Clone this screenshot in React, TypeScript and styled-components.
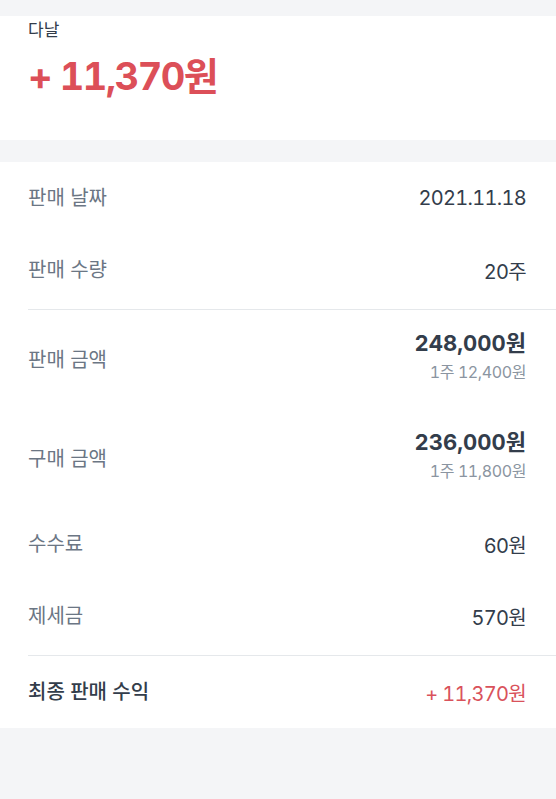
import styled, { createGlobalStyle } from "styled-components";

const GlobalStyle = createGlobalStyle`
    html, body {
        margin: 0;
        padding: 0;
        background-color: #f4f5f7;
    }
    body {
        font-family: "Inter", "Noto Sans CJK KR", sans-serif;
        font-feature-settings: "tnum";
        -webkit-font-smoothing: antialiased;
    }
`;

const Page = styled.div`
    width: 556px;
    min-height: 799px;
    padding-top: 16px;
    background-color: #f4f5f7;
`;

const Summary = styled.section`
    background-color: #fff;
    height: 124px;
    padding: 3px 28px 0;
    box-sizing: border-box;
    margin-bottom: 22px;
`;

const Company = styled.div`
    font-size: 17px;
    line-height: 22px;
    color: #333d4b;
`;

const Profit = styled.div`
    margin-top: 11px;
    font-size: 38px;
    line-height: 48px;
    font-weight: 700;
    color: #dc4f58;
    letter-spacing: -1.5px;
`;

const Details = styled.section`
    background-color: #fff;
    padding-left: 28px;
`;

const Row = styled.div<{ $tall?: boolean }>`
    display: flex;
    align-items: center;
    justify-content: space-between;
    height: ${(p) => (p.$tall ? "99px" : "72px")};
    padding-right: 30px;
    box-sizing: border-box;
`;

const Label = styled.div<{ $strong?: boolean }>`
    font-size: 20px;
    margin-top: -3px;
    color: ${(p) => (p.$strong ? "#333d4b" : "#6b7684")};
    font-weight: ${(p) => (p.$strong ? 500 : 400)};
`;

const Value = styled.div<{ $red?: boolean }>`
    font-size: 20px;
    color: ${(p) => (p.$red ? "#d9525b" : "#333d4b")};
    text-align: right;
    letter-spacing: -0.7px;
`;

const ValueStack = styled.div`
    display: flex;
    flex-direction: column;
    align-items: flex-end;
    gap: 5px;
    margin-top: -7px;
`;

const MainAmount = styled.div`
    font-size: 22px;
    line-height: 26px;
    font-weight: 700;
    color: #333d4b;
`;

const SubAmount = styled.div`
    font-size: 16px;
    line-height: 22px;
    color: #8b95a1;
    letter-spacing: -0.4px;
`;

const Divider = styled.hr`
    margin: 3px 0 0;
    border: none;
    border-top: 1px solid #e5e8eb;
`;

const App = () => {
    return (
        <Page>
            <GlobalStyle />
            <Summary>
                <Company>다날</Company>
                <Profit>+ 11,370원</Profit>
            </Summary>

            <Details>
                <Row>
                    <Label>판매 날짜</Label>
                    <Value>2021.11.18</Value>
                </Row>
                <Row>
                    <Label>판매 수량</Label>
                    <Value>20주</Value>
                </Row>
                <Divider />
                <Row $tall>
                    <Label>판매 금액</Label>
                    <ValueStack>
                        <MainAmount>248,000원</MainAmount>
                        <SubAmount>1주 12,400원</SubAmount>
                    </ValueStack>
                </Row>
                <Row $tall>
                    <Label>구매 금액</Label>
                    <ValueStack>
                        <MainAmount>236,000원</MainAmount>
                        <SubAmount>1주 11,800원</SubAmount>
                    </ValueStack>
                </Row>
                <Row>
                    <Label>수수료</Label>
                    <Value>60원</Value>
                </Row>
                <Row>
                    <Label>제세금</Label>
                    <Value>570원</Value>
                </Row>
                <Divider />
                <Row>
                    <Label $strong>최종 판매 수익</Label>
                    <Value $red>+ 11,370원</Value>
                </Row>
            </Details>
        </Page>
    );
};

export default App;
